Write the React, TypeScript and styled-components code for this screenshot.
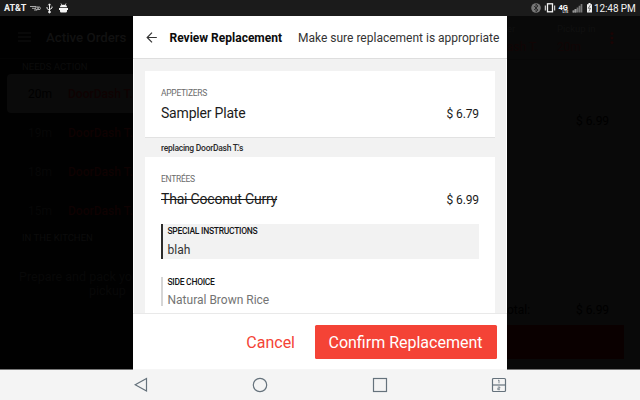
import React from 'react';
import styled, { createGlobalStyle } from 'styled-components';

const Global = createGlobalStyle`
  * { box-sizing: border-box; }
  body { margin: 0; background: #000; font-family: Roboto, "Liberation Sans", sans-serif; }
`;

const Screen = styled.div`
  width: 640px;
  height: 400px;
  overflow: hidden;
  display: flex;
  flex-direction: column;
  background: #000;
`;

const StatusBar = styled.header`
  height: 16px;
  flex: none;
  display: flex;
  justify-content: space-between;
  align-items: center;
  padding: 0 5px 0 4px;
  background: #1b1b1b;
  color: #f2f2f2;
`;
const StatusGroup = styled.div`
  display: flex;
  align-items: center;
  height: 16px;
`;
const Carrier = styled.span`
  width: 26px;
  font-size: 9px;
  font-weight: 700;
  line-height: 17px;
  letter-spacing: -0.1px;
`;
const Clock = styled.span`
  width: 41px;
  font-size: 10px;
  letter-spacing: -0.1px;
  line-height: 17px;
  white-space: nowrap;
`;

const Body = styled.main`
  height: 354px;
  flex: none;
  display: grid;
  grid-template-columns: 133px 374px 133px;
`;

const Orders = styled.aside`
  overflow: hidden;
  background: #010101;
  white-space: nowrap;
  color: #0d0d0d;
  border-bottom: 1px solid #777;
`;
const OrdersHeader = styled.div`
  height: 43px;
  display: flex;
  align-items: center;
  gap: 15px;
  padding-left: 18px;
  border-bottom: 1px solid #040404;
`;
const OrdersTitle = styled.span`
  font-size: 13.3px;
  font-weight: 500;
  color: #111;
`;
const GroupLabel = styled.div`
  height: 15px;
  padding-left: 22px;
  font-size: 9.5px;
  line-height: 16px;
  color: #0c0c0c;
`;
const OrderRow = styled.div<{ $active?: boolean }>`
  height: 39px;
  margin-left: 7px;
  display: flex;
  align-items: center;
  padding-left: 21px;
  font-size: 12px;
  color: ${p => (p.$active ? '#000' : '#070707')};
  background: ${p => (p.$active ? '#0a0a0a' : 'transparent')};
  border-radius: 4px 0 0 4px;
`;
const OrderAge = styled.span`
  width: 40px;
`;
const OrderName = styled.span`
  font-weight: 500;
  color: #0f0202;
`;
const Hint = styled.p`
  width: 160px;
  margin: 25px 0 0 19px;
  font-size: 12.5px;
  line-height: 14px;
  color: #080808;
`;
const HintSecond = styled.span`
  display: block;
  padding-left: 70px;
`;

const Detail = styled.aside`
  overflow: hidden;
  display: flex;
  flex-direction: column;
  background: #090909;
  color: #000;
  font-size: 12px;
  white-space: nowrap;
  border-bottom: 1px solid #777;
`;
const DetailHeader = styled.div`
  height: 44px;
  flex: none;
  display: grid;
  grid-template-columns: 50px 53px 1fr;
  align-items: center;
  border-bottom: 1px solid #070707;
`;
const DetailField = styled.div`
  display: flex;
  flex-direction: column;
  line-height: 18px;
  font-size: 12px;
  color: #110505;
`;
const DetailCaption = styled.span`
  font-size: 9.5px;
  color: #101010;
`;
const DetailLine = styled.div<{ $top: number }>`
  display: grid;
  grid-template-columns: 69px 1fr;
  margin-top: ${p => p.$top}px;
  height: 14px;
  line-height: 14px;
`;
const DetailAction = styled.div`
  width: 117px;
  height: 34px;
  margin-top: 8px;
  background: #0a0000;
`;

const Dialog = styled.section`
  display: flex;
  flex-direction: column;
  background: #fff;
  overflow: hidden;
  white-space: nowrap;
  border-bottom: 1px solid #f6f6f6;
`;
const DialogHeader = styled.div`
  height: 43px;
  flex: none;
  display: flex;
  align-items: center;
  padding-left: 13px;
  border-bottom: 1px solid #dedede;
`;
const DialogTitle = styled.h1`
  width: 128.5px;
  margin: 0 0 0 11.5px;
  padding-top: 1px;
  font-size: 12px;
  font-weight: 700;
  line-height: 16px;
  color: #0b0b0b;
`;
const DialogNote = styled.span`
  padding-top: 1px;
  font-size: 12px;
  line-height: 16px;
  color: #333;
`;
const Scroll = styled.div`
  height: 254px;
  margin: 0 1px;
  padding: 12px 11px 0;
  background: #f2f2f2;
  overflow: hidden;
`;
const Card = styled.article<{ $height: number }>`
  height: ${p => p.$height}px;
  padding: 16px 16px 0;
  background: #fff;
  box-shadow: 0 1px 0 #e2e2e2;
`;
const Category = styled.div`
  height: 12px;
  font-size: 8.5px;
  letter-spacing: -0.28px;
  line-height: 12px;
  color: #6b6b6b;
`;
const ItemLine = styled.div`
  height: 30px;
  display: flex;
  justify-content: space-between;
  align-items: center;
  padding-bottom: 2px;
`;
const ItemName = styled.span<{ $removed?: boolean }>`
  font-size: 14px;
  letter-spacing: -0.19px;
  color: #1b1b1b;
  text-decoration: ${p => (p.$removed ? 'line-through' : 'none')};
  text-decoration-thickness: 1px;
`;
const Price = styled.span`
  padding-top: 2px;
  font-size: 12px;
  letter-spacing: -0.1px;
  color: #1b1b1b;
`;
const Between = styled.div`
  height: 20px;
  padding-left: 16px;
  font-size: 8.5px;
  letter-spacing: -0.25px;
  font-weight: 500;
  line-height: 22px;
  color: #2a2a2a;
`;
const Option = styled.div<{ $strong?: boolean }>`
  height: ${p => (p.$strong ? 35 : 29)}px;
  margin-top: ${p => (p.$strong ? 9 : 18)}px;
  padding: ${p => (p.$strong ? 2 : 0)}px 0 0 4.5px;
  border-left: 2px solid ${p => (p.$strong ? '#2b2b2b' : '#d6d6d6')};
  background: ${p => (p.$strong ? '#f2f2f2' : '#fff')};
`;
const OptionLabel = styled.div`
  height: 10px;
  font-size: 8.5px;
  letter-spacing: -0.28px;
  font-weight: 500;
  line-height: 11px;
  color: #151515;
`;
const OptionValue = styled.div<{ $muted?: boolean }>`
  font-size: 12px;
  line-height: ${p => (p.$muted ? 27 : 29)}px;
  color: ${p => (p.$muted ? '#747474' : '#333')};
`;
const DialogFooter = styled.footer`
  flex: 1;
  display: flex;
  justify-content: flex-end;
  align-items: center;
  gap: 20px;
  padding: 1px 10px 0 0;
  border-top: 1px solid #e9e9e9;
`;
const CancelButton = styled.button`
  padding: 1px 0 0;
  border: 0;
  background: none;
  font: 400 16px/20px Roboto, sans-serif;
  color: #f44336;
`;
const ConfirmButton = styled.button`
  width: 182px;
  height: 34px;
  padding: 0 1px 0 0;
  border: 0;
  border-radius: 1.5px;
  background: #f44336;
  font: 400 16px/36px Roboto, sans-serif;
  color: #fff;
`;

const NavBar = styled.nav`
  flex: 1;
  display: grid;
  grid-template-columns: repeat(4, 119.4px);
  justify-content: center;
  justify-items: center;
  align-items: center;
  background: #f4f4f4;
`;

const Order = ({ age, active }: { age: string; active?: boolean }) => (
  <OrderRow $active={active}>
    <OrderAge>{age}</OrderAge>
    <OrderName>DoorDash T.</OrderName>
  </OrderRow>
);

const LeftStatusIcons = () => (
  <svg width="40" height="16" viewBox="0 0 40 16" fill="none">
    <g stroke="#aaa" strokeWidth="1">
      <path d="M0 6.500h6M2 8.300h4M4 10h3" />
      <circle cx="7" cy="8.300" r="1.500" />
      <circle cx="9" cy="8.300" r="1.400" />
    </g>
    <g stroke="#eee" strokeWidth="1">
      <path d="M19.500 4v8M17 7v1.500l2.500 2M22 6.500v1.500l-2.500 1.700" />
      <circle cx="19.500" cy="12" r="0.900" fill="#eee" />
      <path d="M18.300 5.300l1.200-1.500 1.200 1.500" />
    </g>
    <g fill="#f5f5f5">
      <path d="M30 7.200c0-1.600 1.200-2.400 3.500-2.400S37 5.600 37 7.200zM30 8h7v3.200q0 1.300-1.300 1.300h-4.400q-1.300 0-1.300-1.300z" />
      <path d="M29 8h9v2h-9z" />
      <path d="M31 3.500l1 1.600M36 3.500l-1 1.600" stroke="#f5f5f5" strokeWidth="0.800" />
    </g>
  </svg>
);

const RightStatusIcons = () => (
  <svg width="63" height="16" viewBox="531 0 63 16" fill="none">
    <circle cx="536" cy="8" r="4.800" fill="#777" />
    <path d="M534 6l4 4-2 1.800V4.200L538 6l-4 4" stroke="#222" strokeWidth="0.800" />
    <rect x="547.500" y="3.800" width="5" height="8" stroke="#f4f4f4" strokeWidth="1.300" />
    <path d="M545.300 5.500v5M554.700 5.500v5" stroke="#eee" />
    <text x="558.500" y="10" fontFamily="Roboto" fontWeight="700" fontSize="7.500" fill="#fff">4G</text>
    <text x="562.500" y="13" fontFamily="Roboto" fontWeight="700" fontSize="3.600" fill="#ddd">LTE</text>
    <path d="M573.500 10.500v2M575.500 9v3.500M577.500 7.500v5M579.500 5.800v6.700M581.500 4v8.500" stroke="#777" strokeWidth="1.700" />
    <path d="M573.500 10.500v2M575.500 9v3.500" stroke="#999" strokeWidth="1.700" />
    <path d="M587 4.200h1.500V3h2v1.200h1.500v8.300h-5z" fill="#f2f2f2" />
    <path d="M590.300 5l-2 3.300h2.200l-1.600 3" stroke="#555" strokeWidth="0.800" />
  </svg>
);

const MenuIcon = () => (
  <svg width="13" height="10" viewBox="0 0 13 10" stroke="#111" strokeWidth="1.200">
    <path d="M0 1h13M0 5h13M0 9h13" />
  </svg>
);

const MoreIcon = () => (
  <svg width="4" height="12" viewBox="0 0 4 12" fill="#1a0505">
    <circle cx="2" cy="1.600" r="1.500" />
    <circle cx="2" cy="6" r="1.500" />
    <circle cx="2" cy="10.400" r="1.500" />
  </svg>
);

const BackArrow = () => (
  <svg width="12" height="12" viewBox="0 0 12 12" fill="none" stroke="#333" strokeWidth="1.200">
    <path d="M10.800 6.500H1M6 1.700L1.200 6.500 6 11.300" />
  </svg>
);

const navStroke = { fill: 'none', stroke: '#65727c', strokeWidth: 1.2 };

export default function App() {
  return (
    <>
      <Global />
      <Screen>
        <StatusBar>
          <StatusGroup>
            <Carrier>AT&amp;T</Carrier>
            <LeftStatusIcons />
          </StatusGroup>
          <StatusGroup>
            <RightStatusIcons />
            <Clock>12:48 PM</Clock>
          </StatusGroup>
        </StatusBar>

        <Body>
          <Orders>
            <OrdersHeader>
              <MenuIcon />
              <OrdersTitle>Active Orders</OrdersTitle>
            </OrdersHeader>
            <GroupLabel>NEEDS ACTION</GroupLabel>
            <Order age="20m" active />
            <Order age="19m" />
            <Order age="18m" />
            <Order age="15m" />
            <GroupLabel>IN THE KITCHEN</GroupLabel>
            <Hint>
              Prepare and pack your
              <HintSecond>pickup</HintSecond>
            </Hint>
          </Orders>

          <Dialog>
            <DialogHeader>
              <BackArrow />
              <DialogTitle>Review Replacement</DialogTitle>
              <DialogNote>Make sure replacement is appropriate</DialogNote>
            </DialogHeader>
            <Scroll>
              <Card $height={66}>
                <Category>APPETIZERS</Category>
                <ItemLine>
                  <ItemName>Sampler Plate</ItemName>
                  <Price>$ 6.79</Price>
                </ItemLine>
              </Card>
              <Between>replacing DoorDash T.'s</Between>
              <Card $height={160}>
                <Category>ENTRÉES</Category>
                <ItemLine>
                  <ItemName $removed>Thai Coconut Curry</ItemName>
                  <Price>$ 6.99</Price>
                </ItemLine>
                <Option $strong>
                  <OptionLabel>SPECIAL INSTRUCTIONS</OptionLabel>
                  <OptionValue>blah</OptionValue>
                </Option>
                <Option>
                  <OptionLabel>SIDE CHOICE</OptionLabel>
                  <OptionValue $muted>Natural Brown Rice</OptionValue>
                </Option>
              </Card>
            </Scroll>
            <DialogFooter>
              <CancelButton>Cancel</CancelButton>
              <ConfirmButton>Confirm Replacement</ConfirmButton>
            </DialogFooter>
          </Dialog>

          <Detail>
            <DetailHeader>
              <DetailField>
                <DetailCaption>er</DetailCaption>
                <span>ash T.</span>
              </DetailField>
              <DetailField>
                <DetailCaption>Pickup in</DetailCaption>
                <span>20m</span>
              </DetailField>
              <MoreIcon />
            </DetailHeader>
            <DetailLine $top={54}>
              <span />
              <span>$ 6.99</span>
            </DetailLine>
            <DetailLine $top={175}>
              <span>otal:</span>
              <span>$ 6.99</span>
            </DetailLine>
            <DetailAction />
          </Detail>
        </Body>

        <NavBar>
          <svg width="14" height="16" viewBox="0 0 14 16" {...navStroke}>
            <path d="M12.500 1.500v12.600L1.200 7.800z" />
          </svg>
          <svg width="16" height="16" viewBox="0 0 16 16" {...navStroke}>
            <circle cx="8" cy="8" r="6.700" />
          </svg>
          <svg width="16" height="16" viewBox="0 0 16 16" {...navStroke}>
            <rect x="1.500" y="1.500" width="13" height="13" />
          </svg>
          <svg width="16" height="16" viewBox="0 0 16 16" {...navStroke}>
            <rect x="1.500" y="1.500" width="13" height="13" rx="1" />
            <path d="M1.500 8h13" />
            <path d="M7 3.500l1-.500v3.300M6.800 10h2v1.200h-2v1.500h2.200" strokeWidth=".800" />
          </svg>
        </NavBar>
      </Screen>
    </>
  );
}
